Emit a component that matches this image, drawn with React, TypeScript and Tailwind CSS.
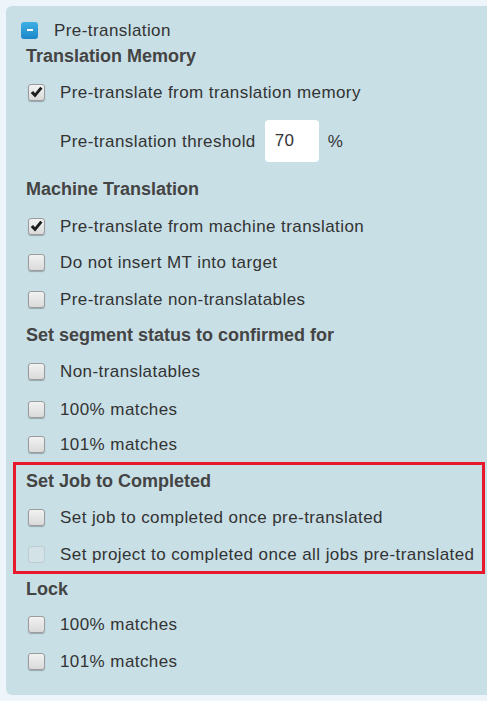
import React from "react";

function Box({ checked = false, disabled = false }: { checked?: boolean; disabled?: boolean }) {
  return (
    <span
      className={
        disabled
          ? "relative inline-block h-[17px] w-[17px] shrink-0 rounded-[3px] border border-[#bccdd3] bg-[#d3e2e7]"
          : "relative inline-block h-[17px] w-[17px] shrink-0 rounded-[3px] border border-[#9c9c9c] bg-gradient-to-b from-[#f2f2f2] to-[#dadada] shadow-[0_1px_1px_rgba(0,0,0,0.25)]"
      }
    >
      {checked && (
        <svg viewBox="0 0 16 16" className="absolute left-[0px] top-[0px] h-[15px] w-[15px]">
          <path d="M1.8 8.6 L4.4 6.4 L6.4 8.8 L12 1.8 L14.4 3.8 L6.5 13.4 Z" fill="#1c1c1c" />
        </svg>
      )}
    </span>
  );
}

function Row({
  label,
  h,
  checked = false,
  disabled = false,
  pl = "pl-[22px]",
}: {
  label: string;
  h: string;
  checked?: boolean;
  disabled?: boolean;
  pl?: string;
}) {
  return (
    <div className={`flex items-center ${h} ${pl}`}>
      <Box checked={checked} disabled={disabled} />
      <span className="ml-[15px] text-[17px] leading-none tracking-[0.42px] text-[#333]">{label}</span>
    </div>
  );
}

function Heading({ text, h, pl = "pl-[20px]" }: { text: string; h: string; pl?: string }) {
  return (
    <div className={`flex items-center ${h} ${pl}`}>
      <span className="text-[18px] font-bold leading-none text-[#444]">{text}</span>
    </div>
  );
}

export default function App() {
  return (
    <div
      className="h-[701px] w-[487px] overflow-hidden bg-[#eef5fa] pl-[6px] pt-[6px]"
      style={{ fontFamily: '"Liberation Sans", Arial, sans-serif' }}
    >
      <div className="h-[689px] w-[520px] rounded-[6px] bg-[#c8dfe6] pt-[12px]">
        <div className="flex h-[24px] items-center pl-[15px]">
          <span className="flex h-[17px] w-[17px] items-center justify-center rounded-[3px] bg-gradient-to-b from-[#3eb0e6] to-[#1a86c8]">
            <span className="h-[1.5px] w-[6px] bg-white" />
          </span>
          <span className="ml-[16px] text-[17px] leading-none tracking-[0.42px] text-[#333]">Pre-translation</span>
        </div>
        <Heading text="Translation Memory" h="h-[28px]" />
        <Row label="Pre-translate from translation memory" h="h-[44px]" checked />
        <div className="flex h-[54px] items-center pl-[54px]">
          <span className="text-[17px] leading-none tracking-[0.42px] text-[#333]">Pre-translation threshold</span>
          <div className="ml-[9px] flex h-[42px] w-[54px] items-center rounded-[4px] bg-white pl-[10px] text-[17px] tracking-[0.42px] text-[#333]">
            70
          </div>
          <span className="ml-[9px] text-[17px] leading-none text-[#333]">%</span>
        </div>
        <Heading text="Machine Translation" h="h-[41px]" />
        <Row label="Pre-translate from machine translation" h="h-[35px]" checked />
        <Row label="Do not insert MT into target" h="h-[37px]" />
        <Row label="Pre-translate non-translatables" h="h-[37px]" />
        <Heading text="Set segment status to confirmed for" h="h-[33px]" />
        <Row label="Non-translatables" h="h-[40px]" />
        <Row label="100% matches" h="h-[36px]" />
        <Row label="101% matches" h="h-[35px]" />
        <div className="ml-[7px] w-[472px] border-[3px] border-[#e8192c]">
          <Heading text="Set Job to Completed" h="h-[32px]" pl="pl-[10px]" />
          <Row label="Set job to completed once pre-translated" h="h-[40px]" pl="pl-[12px]" />
          <Row
            label="Set project to completed once all jobs pre-translated"
            h="h-[34px]"
            pl="pl-[12px]"
            disabled
          />
        </div>
        <Heading text="Lock" h="h-[30px]" />
        <Row label="100% matches" h="h-[40px]" />
        <Row label="101% matches" h="h-[34px]" />
      </div>
    </div>
  );
}
